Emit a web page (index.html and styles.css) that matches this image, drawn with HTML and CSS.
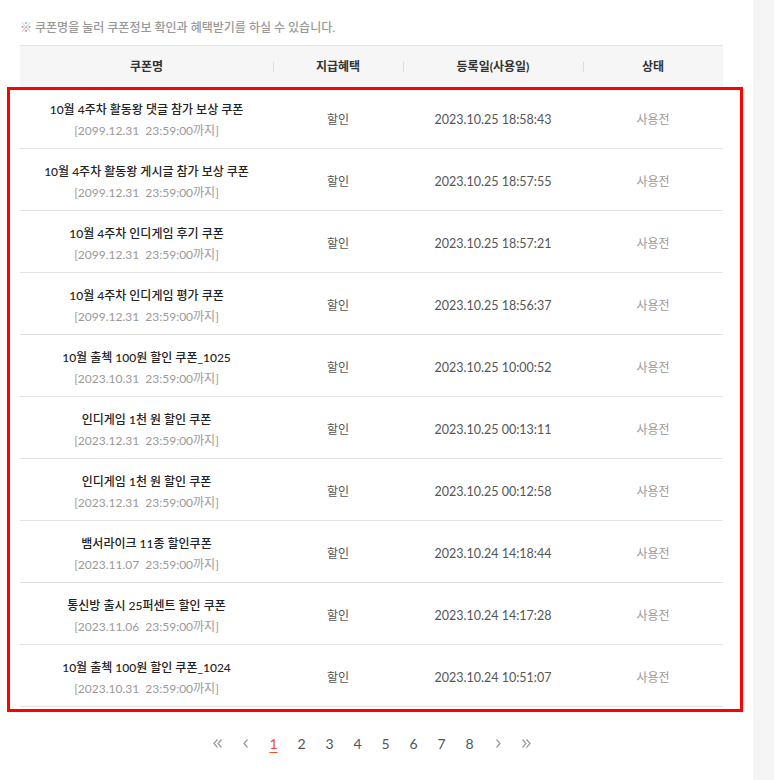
FILE: index.html
```html
<!DOCTYPE html>
<html lang="ko">
<head>
<meta charset="utf-8">
<title>쿠폰</title>
<link rel="stylesheet" href="styles.css">
</head>
<body>
<div class="layout">
  <main class="main">
    <p class="note">※ 쿠폰명을 눌러 쿠폰정보 확인과 혜택받기를 하실 수 있습니다.</p>
    <div class="table-wrap">
      <div class="thead">
        <div class="th c1">쿠폰명</div>
        <div class="th c2">지급혜택</div>
        <div class="th c3">등록일(사용일)</div>
        <div class="th c4">상태</div>
      </div>
      <div class="tbody">
        <div class="row"><div class="td c1"><span class="name">10월 4주차 활동왕 댓글 참가 보상 쿠폰</span><span class="until">[2099.12.31 &nbsp;23:59:00까지]</span></div><div class="td c2">할인</div><div class="td c3">2023.10.25 18:58:43</div><div class="td c4">사용전</div></div>
        <div class="row"><div class="td c1"><span class="name">10월 4주차 활동왕 게시글 참가 보상 쿠폰</span><span class="until">[2099.12.31 &nbsp;23:59:00까지]</span></div><div class="td c2">할인</div><div class="td c3">2023.10.25 18:57:55</div><div class="td c4">사용전</div></div>
        <div class="row"><div class="td c1"><span class="name">10월 4주차 인디게임 후기 쿠폰</span><span class="until">[2099.12.31 &nbsp;23:59:00까지]</span></div><div class="td c2">할인</div><div class="td c3">2023.10.25 18:57:21</div><div class="td c4">사용전</div></div>
        <div class="row"><div class="td c1"><span class="name">10월 4주차 인디게임 평가 쿠폰</span><span class="until">[2099.12.31 &nbsp;23:59:00까지]</span></div><div class="td c2">할인</div><div class="td c3">2023.10.25 18:56:37</div><div class="td c4">사용전</div></div>
        <div class="row"><div class="td c1"><span class="name">10월 출첵 100원 할인 쿠폰_1025</span><span class="until">[2023.10.31 &nbsp;23:59:00까지]</span></div><div class="td c2">할인</div><div class="td c3">2023.10.25 10:00:52</div><div class="td c4">사용전</div></div>
        <div class="row"><div class="td c1"><span class="name">인디게임 1천 원 할인 쿠폰</span><span class="until">[2023.12.31 &nbsp;23:59:00까지]</span></div><div class="td c2">할인</div><div class="td c3">2023.10.25 00:13:11</div><div class="td c4">사용전</div></div>
        <div class="row"><div class="td c1"><span class="name">인디게임 1천 원 할인 쿠폰</span><span class="until">[2023.12.31 &nbsp;23:59:00까지]</span></div><div class="td c2">할인</div><div class="td c3">2023.10.25 00:12:58</div><div class="td c4">사용전</div></div>
        <div class="row"><div class="td c1"><span class="name">뱀서라이크 11종 할인쿠폰</span><span class="until">[2023.11.07 &nbsp;23:59:00까지]</span></div><div class="td c2">할인</div><div class="td c3">2023.10.24 14:18:44</div><div class="td c4">사용전</div></div>
        <div class="row"><div class="td c1"><span class="name">통신방 출시 25퍼센트 할인 쿠폰</span><span class="until">[2023.11.06 &nbsp;23:59:00까지]</span></div><div class="td c2">할인</div><div class="td c3">2023.10.24 14:17:28</div><div class="td c4">사용전</div></div>
        <div class="row"><div class="td c1"><span class="name">10월 출첵 100원 할인 쿠폰_1024</span><span class="until">[2023.10.31 &nbsp;23:59:00까지]</span></div><div class="td c2">할인</div><div class="td c3">2023.10.24 10:51:07</div><div class="td c4">사용전</div></div>
        <div class="highlight"></div>
      </div>
    </div>
    <nav class="pager">
      <a class="pg arrow" href="#"><svg width="10" height="9" viewBox="0 0 10 9"><polyline points="4.5,0.5 1,4.5 4.5,8.5" fill="none" stroke="#9a9a9a" stroke-width="1.2"/><polyline points="8.5,0.5 5,4.5 8.5,8.5" fill="none" stroke="#9a9a9a" stroke-width="1.2"/></svg></a>
      <a class="pg arrow" href="#"><svg width="6" height="9" viewBox="0 0 6 9"><polyline points="4.5,0.5 1,4.5 4.5,8.5" fill="none" stroke="#9a9a9a" stroke-width="1.2"/></svg></a>
      <a class="pg active" href="#">1</a>
      <a class="pg" href="#">2</a>
      <a class="pg" href="#">3</a>
      <a class="pg" href="#">4</a>
      <a class="pg" href="#">5</a>
      <a class="pg" href="#">6</a>
      <a class="pg" href="#">7</a>
      <a class="pg" href="#">8</a>
      <a class="pg arrow" href="#"><svg width="6" height="9" viewBox="0 0 6 9"><polyline points="1.5,0.5 5,4.5 1.5,8.5" fill="none" stroke="#9a9a9a" stroke-width="1.2"/></svg></a>
      <a class="pg arrow" href="#"><svg width="10" height="9" viewBox="0 0 10 9"><polyline points="1.5,0.5 5,4.5 1.5,8.5" fill="none" stroke="#9a9a9a" stroke-width="1.2"/><polyline points="5.5,0.5 9,4.5 5.5,8.5" fill="none" stroke="#9a9a9a" stroke-width="1.2"/></svg></a>
    </nav>
  </main>
  <aside class="side"></aside>
</div>
</body>
</html>
```
FILE: styles.css
```css
html, body {
  margin: 0;
  padding: 0;
  background: #fff;
}
body {
  font-family: Lato, "Noto Sans CJK KR", sans-serif;
  font-size: 12px;
  color: #333;
}
.layout {
  display: flex;
  min-height: 780px;
}
.main {
  width: 703px;
  padding: 0 30px 0 20px;
  flex: none;
}
.side {
  flex: 1;
  background: #f5f5f5;
}
.note {
  margin: 19px 0 8px;
  line-height: 18px;
  font-size: 12px;
  color: #999;
  font-weight: 500;
}
.table-wrap {
  width: 703px;
}
.thead {
  display: flex;
  border-top: 1px solid #e3e3e3;
  background: #f6f6f6;
  height: 41px;
  align-items: center;
}
.th {
  position: relative;
  text-align: center;
  font-weight: 700;
  color: #333;
  line-height: 20px;
  padding-top: 1px;
}
.th + .th::before {
  content: "";
  position: absolute;
  left: 0;
  top: 6px;
  width: 1px;
  height: 10px;
  background: #dedede;
}
.c1 { width: 253px; }
.c2 { width: 130px; }
.c3 { width: 180px; }
.c4 { width: 140px; }
.tbody {
  position: relative;
}
.row {
  display: flex;
  align-items: center;
  box-sizing: border-box;
  height: 62px;
  padding-top: 4px;
  border-bottom: 1px solid #e3e3e3;
}
.td {
  text-align: center;
  line-height: 20px;
}
.td.c1 {
  display: flex;
  flex-direction: column;
  align-items: center;
  gap: 1px;
  padding-top: 2px;
}
.name {
  color: #222;
  font-weight: 500;
}
.until {
  color: #9a9a9a;
}
.td.c2 {
  color: #555;
}
.td.c3 {
  color: #555;
  font-size: 12.5px;
}
.td.c4 {
  color: #999;
}
.highlight {
  position: absolute;
  left: -13px;
  right: -20px;
  top: 0;
  bottom: -5px;
  border: 3px solid #ff0000;
  pointer-events: none;
}
.pager {
  display: flex;
  justify-content: center;
  width: 703px;
  margin-top: 26px;
}
.pg {
  width: 28px;
  height: 20px;
  display: flex;
  align-items: center;
  justify-content: center;
  text-decoration: none;
  color: #4f5561;
  font-size: 14px;
  font-family: Lato, sans-serif;
}
.pg.active {
  color: #f04e2e;
  text-decoration: underline;
  text-underline-offset: 3px;
}
```
